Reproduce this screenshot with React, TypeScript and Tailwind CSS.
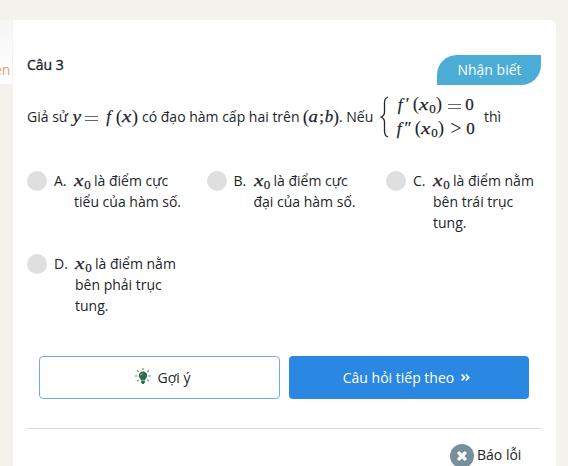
import type { ReactNode } from "react";
import { FaAngleDoubleRight, FaTimes } from "react-icons/fa";

function T({ w, i, className = "", children }: { w: string; i?: boolean; className?: string; children: ReactNode }) {
  return (
    <span
      className={`inline-flex shrink-0 justify-center whitespace-nowrap font-['Liberation_Serif',serif] text-[17px] leading-[22px] [-webkit-text-stroke:0.25px_#212529] ${i ? "italic" : ""} ${w} ${className}`}
    >
      {children}
    </span>
  );
}

function Paren({ children, className = "" }: { children: ReactNode; className?: string }) {
  return (
    <span className={`inline-flex w-[6px] shrink-0 justify-center font-['Liberation_Serif',serif] text-[19px] leading-[22px] ${className}`}>
      {children}
    </span>
  );
}

function X() {
  return <T w="w-[10px]" i><span className="inline-block scale-x-125">x</span></T>;
}

function XZero() {
  return (
    <span className="inline-flex items-baseline">
      <X />
      <T w="w-[7px]" className="relative top-[3px] text-[13px]!">0</T>
    </span>
  );
}

function Equals() {
  return (
    <span className="inline-flex h-[5px] w-[13px] shrink-0 flex-col justify-between">
      <span className="h-px bg-[#666]" />
      <span className="h-px bg-[#666]" />
    </span>
  );
}

function Brace() {
  return (
    <svg width="9" height="42" viewBox="0 0 9 42" fill="none" stroke="#212529" strokeWidth="1.3" className="ml-px shrink-0">
      <path d="M8 1C4.8 2 4.500 4 4.500 7v9c0 3-.7 4-3.500 5 2.800 1 3.500 2 3.500 5v9c0 3 .3 5 3.500 6" />
    </svg>
  );
}

function Option({ letter, lw, lines }: { letter: string; lw: string; lines: string[] }) {
  return (
    <div className="flex items-start">
      <span className="mt-px h-5 w-5 shrink-0 rounded-full bg-[#dfdfdf]" />
      <span className={`ml-[7px] shrink-0 ${lw}`}>{letter}.</span>
      <div className="whitespace-nowrap">
        <div className="flex h-[21px] items-baseline">
          <XZero />
          <span className="ml-[3px]">{lines[0]}</span>
        </div>
        {lines.slice(1).map((l) => (
          <div key={l} className="h-[21px]">{l}</div>
        ))}
      </div>
    </div>
  );
}

function Bulb() {
  return (
    <svg width="16" height="17" viewBox="0 0 16 17" className="-mt-[3px]">
      <path d="M8 3.500a4.200 4.200 0 0 0-4.200 4.200c0 2 1.900 2.700 2.300 4.800h3.800c.4-2.100 2.300-2.800 2.300-4.800A4.200 4.200 0 0 0 8 3.500z" fill="#2d6a4f" />
      <path d="M6.200 13h3.600v1.500L8.800 16H7.200l-1-1.500z" fill="#2d6a4f" />
      <path d="M8 0v2M0 8h2.500M13.500 8H16M2 2.500l1.700 1.300M14 2.500l-1.700 1.300M2 13.200l1.700-1.300M14 13.200l-1.700-1.300" stroke="#5f9279" strokeWidth="1.1" />
      <path d="M5.600 7.500Q5.800 5.600 7.500 5.300" stroke="#b9d3c6" strokeWidth="0.9" fill="none" />
    </svg>
  );
}

export default function App() {
  return (
    <div className="flex h-[466px] w-[568px] overflow-hidden bg-[#f3f2ed] pt-5 font-['Open_Sans','Noto_Sans',sans-serif] text-[14px] leading-[21px] text-[#212529]">
      <div className="flex h-16 w-3 shrink-0 bg-linear-to-b from-[#f6f6f6] to-white pt-[39px] text-[#e5a06b]">
        <span className="-ml-[6px]">en</span>
      </div>
      <main className="ml-px h-[446px] w-[543px] shrink-0 rounded-tr-md bg-white pl-[14px]">
        <header className="flex h-[65px] w-[514px] items-start justify-between">
          <h1 className="pt-[34px] font-medium [-webkit-text-stroke:0.35px_#212529]">Câu 3</h1>
          <span className="mt-[35px] flex h-[30px] w-[104px] items-center justify-center rounded-tl-[20px] rounded-br-[20px] bg-[#4bacd6] pb-[2px] pl-px text-white">Nhận biết</span>
        </header>

        <div className="mt-[11px] flex h-[42px] items-center whitespace-nowrap">
          <span className="mb-[2px] w-[45px]">Giả sử</span>
          <T w="w-[10px]" i><span className="inline-block scale-x-115">y</span></T>
          <span className="mt-[2px] ml-[3px] flex"><Equals /></span>
          <T w="w-[11px]" i className="ml-[5px]">f</T>
          <Paren className="ml-[2px]">(</Paren>
          <X />
          <Paren>)</Paren>
          <span className="mb-[2px] ml-[4px] w-[161px]">có đạo hàm cấp hai trên</span>
          <Paren>(</Paren>
          <T w="w-[9px]" i><span className="inline-block scale-x-110">a</span></T>
          <T w="w-[7px]">;</T>
          <T w="w-[8px]" i>b</T>
          <Paren>)</Paren>
          <span className="mb-[2px] w-[40px]">. Nếu</span>
          <Brace />
          <div className="mb-[3px] ml-[6px] flex w-[88px] flex-col">
            <div className="flex h-[23px] items-baseline">
              <T w="w-[10px]" i>f</T>
              <T w="w-[5px]" className="relative -top-px">′</T>
              <Paren className="ml-[3px]">(</Paren>
              <XZero />
              <Paren>)</Paren>
              <span className="relative -top-[5px] ml-[6px] flex"><Equals /></span>
              <T w="w-[9px]" className="ml-[4px]">0</T>
            </div>
            <div className="flex h-[23px] items-baseline">
              <T w="w-[10px]" i className="-ml-px">f</T>
              <T w="w-[8px]" className="relative -top-px">″</T>
              <Paren className="ml-[3px]">(</Paren>
              <XZero />
              <Paren>)</Paren>
              <T w="w-[12px]" className="relative top-px ml-[6px] text-[20px]! [-webkit-text-stroke:0]!">&gt;</T>
              <T w="w-[9px]" className="ml-[4px]">0</T>
            </div>
          </div>
          <span className="mb-[2px] ml-px">thì</span>
        </div>

        <div className="mt-[32px] grid grid-cols-[179.500px_179.500px_170px] grid-rows-[83px_83px]">
          <Option letter="A" lw="w-[20px]" lines={["là điểm cực", "tiểu của hàm số."]} />
          <Option letter="B" lw="w-[20px]" lines={["là điểm cực", "đại của hàm số."]} />
          <Option letter="C" lw="w-[20px]" lines={["là điểm nằm", "bên trái trục", "tung."]} />
          <Option letter="D" lw="w-[21px]" lines={["là điểm nằm", "bên phải trục", "tung."]} />
        </div>

        <div className="mt-[20px] ml-[12px] flex h-[43px] gap-[9px]">
          <button className="flex w-[241px] items-center justify-center gap-[7px] rounded-[4px] border border-[#6badec] bg-white pl-[6px]">
            <Bulb />
            <span>Gợi ý</span>
          </button>
          <button className="flex w-[240px] items-center justify-center gap-[6px] rounded-[4px] bg-[#2a88e2] pr-[4px] text-white">
            <span>Câu hỏi tiếp theo</span>
            <FaAngleDoubleRight size={11} />
          </button>
        </div>

        <div className="mt-[29px] w-[514px] border-t border-[#d9d9d9]">
          <div className="ml-[423px] mt-[15px] flex items-center gap-[3px] whitespace-nowrap">
            <span className="flex h-6 w-6 items-center justify-center rounded-full bg-[#78909c] text-white">
              <FaTimes size={12} stroke="white" strokeWidth={50} />
            </span>
            <span className="mb-[3px]">Báo lỗi</span>
          </div>
        </div>
      </main>
    </div>
  );
}
